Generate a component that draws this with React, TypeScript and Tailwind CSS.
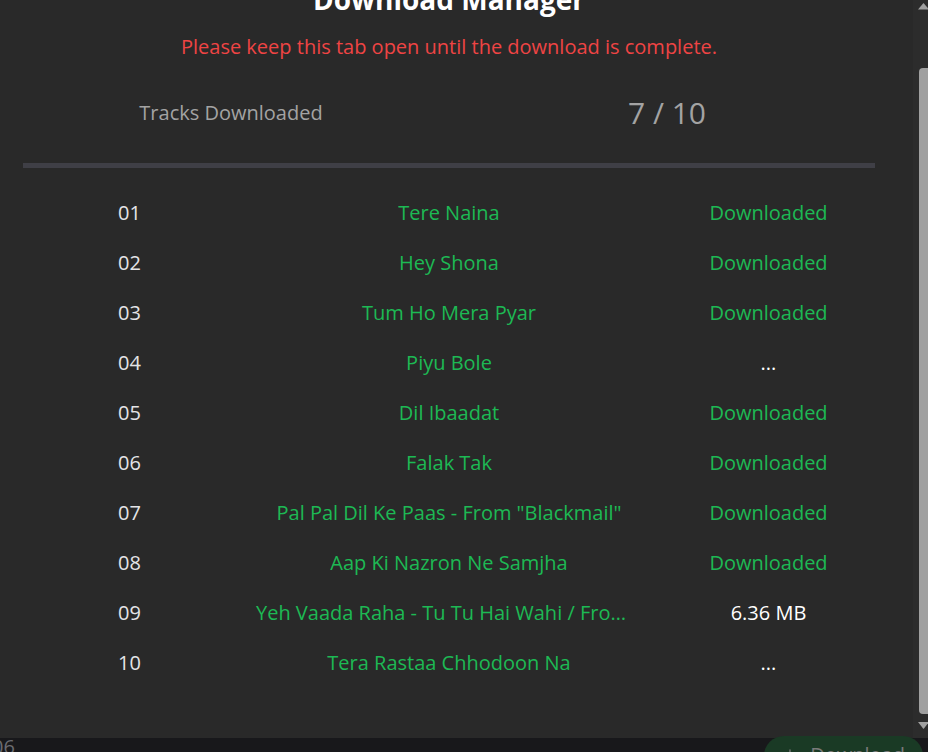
import React, { useLayoutEffect, useRef } from "react";
import { Download } from "lucide-react";

type Track = { no: string; title: string; status: string };

const tracks: Track[] = [
  { no: "01", title: "Tere Naina", status: "Downloaded" },
  { no: "02", title: "Hey Shona", status: "Downloaded" },
  { no: "03", title: "Tum Ho Mera Pyar", status: "Downloaded" },
  { no: "04", title: "Piyu Bole", status: "..." },
  { no: "05", title: "Dil Ibaadat", status: "Downloaded" },
  { no: "06", title: "Falak Tak", status: "Downloaded" },
  { no: "07", title: 'Pal Pal Dil Ke Paas - From "Blackmail"', status: "Downloaded" },
  { no: "08", title: "Aap Ki Nazron Ne Samjha", status: "Downloaded" },
  { no: "09", title: 'Yeh Vaada Raha - Tu Tu Hai Wahi / From "Yeh Vaada Raha"', status: "6.36 MB" },
  { no: "10", title: "Tera Rastaa Chhodoon Na", status: "..." },
];

// the page's own scrollbar, drawn since the headless browser hides it
const ScrollBar = () => (
  <svg width="15" height="738" viewBox="0 0 15 738" className="shrink-0 bg-[#2c2c2c]">
    <polygon points="5,9.5 16,9.5 10.5,3" fill="#a0a0a0" />
    <rect x="6" y="68" width="12" height="646" rx="4" fill="#a0a0a0" />
    <polygon points="5,722 16,722 10.5,729" fill="#a0a0a0" />
  </svg>
);

const App = () => {
  const scrollRef = useRef<HTMLDivElement>(null);

  useLayoutEffect(() => {
    if (scrollRef.current) scrollRef.current.scrollTop = 61;
  }, []);

  return (
    <div className="h-[752px] w-[928px] overflow-hidden bg-[#18181b] flex flex-col font-['Open_Sans',sans-serif]">
      <div className="h-[738px] shrink-0 flex bg-[#292929]">
        <div ref={scrollRef} className="flex-1 overflow-hidden">
          <div className="pl-[23px] pr-[38px] pt-[42px] pb-[62px]">
            <h2 className="text-center text-[28px] leading-[36px] font-bold text-white">
              Download Manager
            </h2>
            <p className="mt-4 text-center text-xl leading-7 text-[#ef4444]">
              Please keep this tab open until the download is complete.
            </p>

            <div className="mt-[34px] grid grid-cols-2 gap-5 items-center text-center">
              <span className="text-xl text-[#a3a3a3]">Tracks Downloaded</span>
              <span className="text-[30px] leading-[36px] text-[#a3a3a3]">7 / 10</span>
            </div>

            <div className="mt-8 h-[5px] bg-[#3f3f46]" />

            <div className="mt-5">
              {tracks.map((t) => (
                <div key={t.no} className="grid grid-cols-[1fr_2fr_1fr] h-[50px] items-center text-xl text-center">
                  <span className="text-[#e4e4e7]">{t.no}</span>
                  <span className="px-5 truncate text-[#1db954]">{t.title}</span>
                  <span className={t.status === "Downloaded" ? "text-[#1db954]" : "text-white"}>
                    {t.status}
                  </span>
                </div>
              ))}
            </div>
          </div>
        </div>
        <ScrollBar />
      </div>

      <div className="flex-1 flex items-start justify-between text-xl leading-7 text-[#6b6b70]">
        <span className="-ml-[8px] -mt-[5px]">06</span>
        <div className="mr-[5px] -mt-[2px] w-[159px] h-[40px] rounded-full bg-[#1a3a25] flex items-start justify-center gap-3 pt-[5px] text-[#7a7a7a]">
          <Download size={16} className="mt-[7px]" />
          <span>Download</span>
        </div>
      </div>
    </div>
  );
};

export default App;
